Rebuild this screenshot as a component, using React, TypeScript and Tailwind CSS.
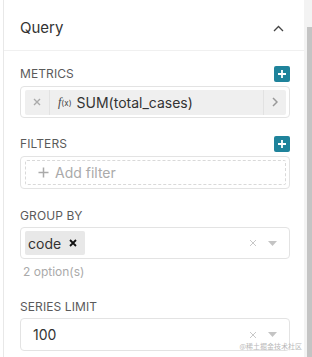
const Label = ({ text, plus }: { text: string; plus?: boolean }) => (
  <div className="flex h-4 items-center justify-between">
    <span className="text-[12px] leading-none tracking-[0.1px] text-[#5a5a5a]">{text}</span>
    {plus && (
      <span className="flex h-4 w-4 items-center justify-center rounded-[2px] bg-[#1f839b]">
        <svg width="10" height="10" viewBox="0 0 10 10">
          <path d="M5 1v8M1 5h8" stroke="#fff" strokeWidth="1.8" />
        </svg>
      </span>
    )}
  </div>
);

const SelectIcons = () => (
  <div className="ml-auto flex items-center gap-[11px] pr-[12px]">
    <svg width="8" height="8" viewBox="0 0 8 8">
      <path d="M1 1l6 6M7 1L1 7" stroke="#c8c8c8" strokeWidth="1" />
    </svg>
    <svg width="9" height="5" viewBox="0 0 9 5">
      <path d="M0 0h9L4.5 5z" fill="#c4c4c4" />
    </svg>
  </div>
);

export default function App() {
  return (
    <div className="flex h-[357px] w-[312px] bg-white pl-[3px] font-['Inter',sans-serif]">
      <div className="w-[301px] border-l border-[#e8e8e8]">
        <div className="flex h-[51px] items-center justify-between border-b border-[#f0f0f0] pl-4 pr-[20px] pt-[6px]">
          <span className="text-[15px] text-[#333]">Query</span>
          <svg width="11" height="7" viewBox="0 0 11 7">
            <path d="M1 6l4.5-4.5L10 6" fill="none" stroke="#444" strokeWidth="1.3" />
          </svg>
        </div>

        <div className="relative pl-4 pr-[14px]">
          <div className="mt-[15px]">
            <Label text="METRICS" plus />
          </div>
          <div className="mt-1 flex h-[32px] items-center rounded-[4px] border border-[#e3e3e3] pl-1 pr-[3px]">
            <div className="flex h-[25px] w-full items-stretch rounded-[2px] bg-[#efefef]">
              <div className="flex w-[25px] items-center justify-center border-r border-[#e2e2e2]">
                <svg width="8" height="8" viewBox="0 0 8 8">
                  <path d="M1 1l6 6M7 1L1 7" stroke="#aaa" strokeWidth="1.4" />
                </svg>
              </div>
              <div className="flex flex-1 items-center pl-[8px] text-[14px] text-[#333]">
                <span className="mr-[5px] text-[11px] text-[#444]">
                  <i className="font-['Liberation_Serif',serif] text-[12px]">f</i>
                  <span className="text-[8px]">(x)</span>
                </span>
                SUM(total_cases)
              </div>
              <div className="flex w-[23px] items-center justify-center border-l border-[#e2e2e2]">
                <svg width="6" height="10" viewBox="0 0 6 10">
                  <path d="M1 1l4 4-4 4" fill="none" stroke="#999" strokeWidth="1.5" />
                </svg>
              </div>
            </div>
          </div>

          <div className="mt-[18px]">
            <Label text="FILTERS" plus />
          </div>
          <div className="mt-1 flex h-[33px] items-center rounded-[4px] border border-[#e3e3e3] pl-1 pr-[3px]">
            <div className="flex h-[25px] w-full items-center rounded-[2px] border border-dashed border-[#d9d9d9] pl-[12px] text-[14px] text-[#aaa]">
              <svg width="11" height="11" viewBox="0 0 11 11" className="mr-[6px]">
                <path d="M5.5 0.5v10M0.5 5.5h10" stroke="#aaa" strokeWidth="1.5" />
              </svg>
              Add filter
            </div>
          </div>

          <div className="mt-[19px]">
            <Label text="GROUP BY" />
          </div>
          <div className="mt-[3px] flex h-[32px] items-center rounded-[4px] border border-[#e3e3e3] pl-1">
            <div className="flex h-[24px] w-[60px] items-center justify-between rounded-[2px] bg-[#e8e8e8] pl-[3px] pr-[8px] text-[14px] text-[#333]">
              code
              <svg width="8" height="8" viewBox="0 0 8 8">
                <path d="M1 1l6 6M7 1L1 7" stroke="#111" strokeWidth="1.8" />
              </svg>
            </div>
            <SelectIcons />
          </div>
          <div className="mt-[5px] flex h-4 items-center pl-[3px] text-[12px] text-[#aaa]">2 option(s)</div>

          <div className="mt-[19px]">
            <Label text="SERIES LIMIT" />
          </div>
          <div className="mt-[3px] flex h-[33px] items-center rounded-[4px] border border-[#e3e3e3] pl-[12px] text-[14px] text-[#333]">
            100
            <SelectIcons />
          </div>
          <span className="absolute bottom-[1px] right-[2px] font-['Noto_Sans_CJK_SC',sans-serif] text-[7px] leading-none text-[#b8b8b8]">
            @稀土掘金技术社区
          </span>
        </div>
      </div>
      <div className="relative w-2 bg-[#f3f3f3]">
        <div className="absolute right-0 top-[27px] bottom-0 w-[5px] bg-[#c4c4c4]" />
      </div>
    </div>
  );
}
